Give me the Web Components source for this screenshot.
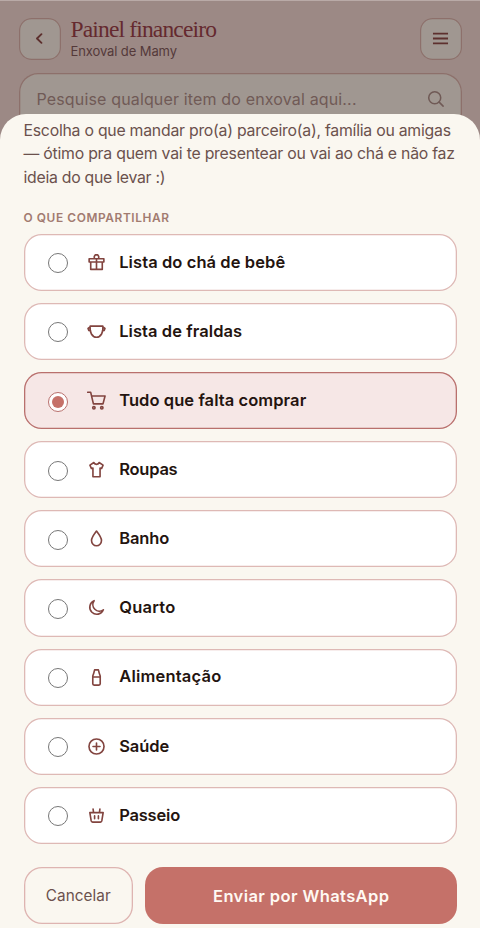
<!DOCTYPE html>
<html lang="pt-BR">
<head>
<meta charset="utf-8">
<title>Painel financeiro</title>
<style>
html,body{margin:0;height:100%;overflow:hidden}
body{font-family:Inter,"Liberation Sans",sans-serif;background:#9c8985}
</style>
</head>
<body>
<share-screen></share-screen>
<script>
const ICONS={
 back:'<path d="M14.500 6.500 8.800 12l5.700 5.500" stroke-width="2.400"/>',
 menu:'<path d="M2.500 5.800h19M2.500 12h19M2.500 18.200h19" stroke-width="2.400" stroke-linecap="butt"/>',
 search:'<circle cx="10.300" cy="10.300" r="8"/><path d="m16.200 16.200 5.300 5.300"/>',
 gift:'<path d="M2.700 7.300h18.600v4H2.700zM4.700 11.300v9.400h14.600v-9.400M12 7.300v13.400M12 7.200H9.200V4.400L10.400 2.300h3.200l1.200 2.100v2.800z"/>',
 diaper:'<path d="M4 5.200h16c.900 7.900-2.400 14-8 14S3.100 13.100 4 5.200zM4 6.200 1.300 8.200l1 2.500 2.200 0M20 6.200l2.700 2-1 2.500-2.200 0"/>',
 cart:'<path d="M.900 1.500h3.700l3.500 14.800h12.100L22.800 6.300H5.800"/><circle cx="8.700" cy="21.200" r="1.500"/><circle cx="18.700" cy="21.200" r="1.500"/>',
 shirt:'<path d="M8.700 3.200 3.700 6.500l1.800 4.200 2-.600v11h9v-11l2 .600 1.800-4.200-5-3.300c-.700 3-5.900 3-6.600 0z"/>',
 drop:'<path d="M12 2.600c3.500 4.600 6.300 8.100 6.300 11.800a6.300 6.800 0 0 1-12.600 0C5.700 10.700 8.500 7.200 12 2.600z"/>',
 moon:'<path d="M9 3.400a8.900 8.900 0 1 0 11.700 11.500A8.300 8.300 0 0 1 9 3.400z"/>',
 bottle:'<path d="M8.600 6.400 9.600 2.400h4.800l1 4M8.600 6.400 7.300 10v10c0 1 .600 1.600 1.600 1.600h6.200c1 0 1.600-.600 1.600-1.600V10l-1.300-3.600M7.300 11.400h9.400"/>',
 plus:'<circle cx="12" cy="12" r="9.500"/><path d="M12 7.600v8.800M7.600 12h8.800"/>',
 basket:'<path d="M3.600 8.300h16.800l-1.700 10.600c-.200 1-.700 1.400-1.700 1.400H7c-1 0-1.500-.400-1.700-1.400zM8.300 8.300 7.700 3.900M15.700 8.300l.600-4.400M9.600 12.500v3.500M14.400 12.500v3.500"/>'
};
function define(name,html,setup){
 const t=document.createElement('template');t.innerHTML=html;
 customElements.define(name,class extends HTMLElement{
  connectedCallback(){
   if(this.shadowRoot)return;
   const root=this.attachShadow({mode:'open'});
   const c=t.content.cloneNode(true);
   if(setup)setup(this,c);
   root.append(c);
   if(this.ready)this.ready();
  }
 });
}
define('ui-icon',`<style>:host{display:block;flex:none;width:var(--size,20px);height:var(--size,20px)}svg{display:block;width:100%;height:100%;fill:none;stroke:currentColor;stroke-width:2.050;stroke-linecap:round;stroke-linejoin:round}</style><svg viewBox="0 0 24 24"></svg>`,
 (h,c)=>{c.querySelector('svg').innerHTML=ICONS[h.getAttribute('name')]});
/* One line of text, tracked so that it spans the given width. */
define('fit-text',`<style>:host{display:block;flex:none;white-space:nowrap}span{display:inline-block}</style><span><slot></slot></span>`,
 (h)=>{h.ready=()=>{
  const s=h.shadowRoot.querySelector('span'),w=+h.getAttribute('width');
  h.style.width=w+'px';
  s.style.letterSpacing=(w-s.getBoundingClientRect().width)/(h.textContent.length-1)+'px';
 }});
define('square-button',`<style>:host{box-sizing:border-box;flex:none;display:grid;place-items:center;width:41.500px;height:41.500px;border-radius:12.500px;background:#a09791;box-shadow:inset 0 0 0 1.200px #8d706b;color:#5d302e}</style><slot></slot>`);
define('app-header',`<style>
:host{display:block;padding:18px 18.500px 0 19px}
.bar{display:flex;align-items:flex-start;height:41.500px}
.titles{flex:1;padding-left:10px;margin-top:-1px}
.title{font:500 23.500px/24px "Liberation Serif",serif;color:#65292f}
.sub{font-size:13px;line-height:18px;color:#54393a;padding-top:1px}
.search{margin-top:13.200px;height:60px;box-sizing:border-box;border-radius:19px;background:#a09791;box-shadow:inset 0 0 0 1.300px #8d706b;display:flex;justify-content:space-between;padding:0 16.500px 0 17.500px;color:#705a56;font-size:16px;line-height:52px}
ui-icon{--size:19px}.search ui-icon{--size:18px;margin-top:17.500px}
</style>
<div class="bar"><square-button><ui-icon name="back"></ui-icon></square-button>
<div class="titles"><fit-text class="title" width="146.500">Painel financeiro</fit-text><fit-text class="sub" width="106.500">Enxoval de Mamy</fit-text></div>
<square-button><ui-icon name="menu"></ui-icon></square-button></div>
<div class="search"><fit-text width="320">Pesquise qualquer item do enxoval aqui...</fit-text><ui-icon name="search"></ui-icon></div>`);
define('share-option',`<style>
:host{box-sizing:border-box;height:57.150px;border-radius:17.500px;background:#fff;box-shadow:inset 0 0 0 1.300px #deb9b5;display:flex;align-items:center;padding-left:24.500px}
:host([checked]){background:#f6e7e6;box-shadow:inset 0 0 0 1.300px #b9706d}
.radio{box-sizing:border-box;width:20px;height:20px;border:1px solid #777;border-radius:50%;display:grid;place-items:center;margin:2px 18.700px 0 0}
:host([checked]) .radio{border-color:#b9706d;background:#fff}
:host([checked]) .radio::after{content:"";width:12px;height:12px;border-radius:50%;background:#c57169}
ui-icon{--size:19px;color:#82443f;margin-right:13.500px}
fit-text{font-size:16.500px;font-weight:600;line-height:24px;color:#24140f;margin-bottom:1.200px}
</style><span class="radio"></span><ui-icon></ui-icon><fit-text></fit-text>`,
 (h,c)=>{
  c.querySelector('ui-icon').setAttribute('name',h.getAttribute('icon'));
  const f=c.querySelector('fit-text');f.setAttribute('width',h.getAttribute('width'));f.textContent=h.getAttribute('label');
 });
define('action-button',`<style>:host{box-sizing:border-box;height:56.200px;border-radius:18px;display:grid;place-items:center;font-size:15.300px;color:#6b514d;width:109.500px;box-shadow:inset 0 0 0 1.300px #deb4b1}
:host([primary]){flex:1;background:#c57169;box-shadow:none;color:#fff9f3;font-size:16.500px;font-weight:600}</style><slot></slot>`);
define('share-sheet',`<style>
:host{display:block;box-sizing:border-box;background:#faf7f0;border-radius:26px 26px 0 0;padding:5.200px 22.700px 0 23.500px}
.intro{font-size:15.800px;line-height:23.600px;color:#6b514d}
.label{font-size:11.900px;font-weight:600;line-height:16px;color:#a27b70;margin-top:20.500px}
.list{display:grid;gap:12px;margin-top:7.700px}
.actions{display:flex;gap:11.700px;margin-top:23.500px}
</style>
<div class="intro"><fit-text width="427.500">Escolha o que mandar pro(a) parceiro(a), família ou amigas</fit-text><fit-text width="431.500">— ótimo pra quem vai te presentear ou vai ao chá e não faz</fit-text><fit-text width="142">ideia do que levar :)</fit-text></div>
<fit-text class="label" width="145.500">O QUE COMPARTILHAR</fit-text>
<div class="list">
<share-option icon="gift" label="Lista do chá de bebê" width="166"></share-option>
<share-option icon="diaper" label="Lista de fraldas" width="123"></share-option>
<share-option icon="cart" label="Tudo que falta comprar" width="187" checked></share-option>
<share-option icon="shirt" label="Roupas" width="58.500"></share-option>
<share-option icon="drop" label="Banho" width="50"></share-option>
<share-option icon="moon" label="Quarto" width="56"></share-option>
<share-option icon="bottle" label="Alimentação" width="102"></share-option>
<share-option icon="plus" label="Saúde" width="50"></share-option>
<share-option icon="basket" label="Passeio" width="61"></share-option>
</div>
<div class="actions"><action-button><fit-text width="65">Cancelar</fit-text></action-button><action-button primary><fit-text width="176">Enviar por WhatsApp</fit-text></action-button></div>`);
define('share-screen',`<style>
:host{display:block;position:relative;height:928px;box-sizing:border-box;overflow:hidden;background:#9c8985;box-shadow:inset 0 1px #b9aaa7}
share-sheet{position:absolute;left:0;right:0;top:113.500px;bottom:0}
</style><app-header></app-header><share-sheet></share-sheet>`);
</script>
</body>
</html>
